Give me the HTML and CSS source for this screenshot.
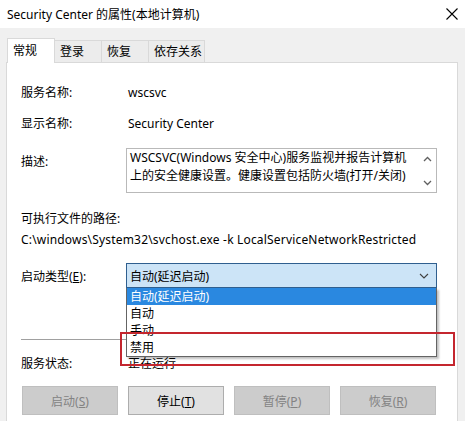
FILE: index.html
```html
<!DOCTYPE html>
<html lang="zh-CN">
<head>
  <meta charset="UTF-8" />
  <title>Security Center 的属性(本地计算机)</title>
  <link rel="stylesheet" href="styles.css">
</head>
<body>

  <div class="titlebar">
    <span class="title">Security Center 的属性(本地计算机)</span>
    <svg class="close" width="12" height="12" viewBox="0 0 12 12">
      <path d="M0.5 0.5 L11.5 11.5 M11.5 0.5 L0.5 11.5" stroke="#000" stroke-width="1.1" fill="none"/>
    </svg>
  </div>

  <div class="dialog">
    <!-- Pestañas -->
    <div class="tabs">
      <div class="tab active">常规</div>
      <div class="tab">登录</div>
      <div class="tab">恢复</div>
      <div class="tab last">依存关系</div>
    </div>

    <div class="panel">
      <div class="row first">
        <div class="label">服务名称:</div>
        <div class="value">wscsvc</div>
      </div>
      <div class="row r2">
        <div class="label">显示名称:</div>
        <div class="value">Security Center</div>
      </div>
      <div class="row desc">
        <div class="label">描述:</div>
        <div class="textbox">
          <div class="textbox-text">WSCSVC(Windows 安全中心)服务监视并报告计算机上的安全健康设置。健康设置包括防火墙(打开/关闭)</div>
          <div class="scrollbar">
            <svg width="9" height="6" viewBox="0 0 9 6"><path d="M1 5 L4.5 1.5 L8 5" stroke="#606060" stroke-width="1.3" fill="none"/></svg>
            <svg width="9" height="6" viewBox="0 0 9 6"><path d="M1 1 L4.5 4.5 L8 1" stroke="#606060" stroke-width="1.3" fill="none"/></svg>
          </div>
        </div>
      </div>
      <div class="line exec-label">可执行文件的路径:</div>
      <div class="line exec-path">C:\windows\System32\svchost.exe -k LocalServiceNetworkRestricted</div>

      <div class="row startup">
        <div class="label">启动类型(<u>E</u>):</div>
        <div class="combo">
          <div class="combo-box">
            <span>自动(延迟启动)</span>
            <svg width="10" height="6" viewBox="0 0 10 6"><path d="M1 1 L5 5 L9 1" stroke="#404040" stroke-width="1.1" fill="none"/></svg>
          </div>
          <div class="combo-list">
            <div class="item selected">自动(延迟启动)</div>
            <div class="item">自动</div>
            <div class="item">手动</div>
            <div class="item">禁用</div>
          </div>
        </div>
      </div>

      <div class="separator"></div>

      <div class="row status">
        <div class="label">服务状态:</div>
        <div class="value">正在运行</div>
      </div>

      <div class="buttons">
        <button class="btn" disabled>启动(<u>S</u>)</button>
        <button class="btn">停止(<u>T</u>)</button>
        <button class="btn" disabled>暂停(<u>P</u>)</button>
        <button class="btn" disabled>恢复(<u>R</u>)</button>
      </div>
    </div>
  </div>

  <div class="highlight"></div>

</body>
</html>
```

FILE: styles.css
```css
body {
  margin: 0;
  width: 465px;
  height: 421px;
  overflow: hidden;
  background-color: #f0f0f0;
  font-family: "Noto Sans", "Noto Sans CJK SC", sans-serif;
  font-size: 12px;
  color: #000;
  position: relative;
}
.titlebar {
  height: 28px;
  background: #fff;
  display: flex;
  align-items: center;
  justify-content: space-between;
  padding: 0 7px 0 7px;
}
.close {
  display: block;
}
.dialog {
  padding: 10px 7px 0 6px;
}
.tabs {
  display: flex;
  align-items: flex-end;
  height: 24px;
  padding-left: 1px;
}
.tab {
  width: 48px;
  height: 22px;
  box-sizing: border-box;
  padding-left: 5px;
  line-height: 21px;
  background: #ececec;
  border: 1px solid #d9d9d9;
  border-bottom: none;
  margin-right: -1px;
}
.tab.last {
  width: 57px;
}
.tab.active {
  background: #fff;
  line-height: 23px;
  position: relative;
  z-index: 1;
  margin-bottom: -1px;
  height: 25px;
}
.panel {
  background: #fff;
  border: 1px solid #d9d9d9;
  border-bottom: none;
  height: 359px;
  padding: 19px 0 0 14px;
  box-sizing: border-box;
}
.row {
  display: flex;
  align-items: center;
  height: 20px;
}
.label {
  width: 105px;
  flex-shrink: 0;
}
.value {
  padding-left: 2px;
}
.r2 {
  margin-top: 11px;
}
.desc {
  margin-top: 15px;
  height: 45px;
  align-items: flex-start;
}
.desc .label {
  padding-top: 4px;
}
.textbox {
  width: 311px;
  height: 45px;
  box-sizing: border-box;
  border: 1px solid #b9b9b9;
  display: flex;
}
.textbox-text {
  flex: 1;
  padding: 0 4px 0 3px;
  line-height: 18px;
}
.scrollbar {
  width: 17px;
  display: flex;
  flex-direction: column;
  justify-content: space-between;
  align-items: center;
  padding: 7px 0 6px;
}
.scrollbar svg {
  display: block;
}
.line {
  height: 20px;
  line-height: 20px;
}
.exec-label {
  margin-top: 16px;
}
.exec-path {
  margin-top: 1px;
  letter-spacing: 0.18px;
}
.startup {
  margin-top: 13px;
  height: 25px;
}
.combo {
  position: relative;
  width: 311px;
  height: 25px;
}
.combo-box {
  height: 25px;
  box-sizing: border-box;
  border: 1px solid #2f5f8f;
  background: #cce4f7;
  display: flex;
  align-items: center;
  justify-content: space-between;
  padding: 0 7px 0 3px;
}
.combo-list {
  position: absolute;
  top: 25px;
  left: 0;
  width: 311px;
  height: 69px;
  box-sizing: border-box;
  border: 1px solid #646464;
  border-top: none;
  background: #fff;
  box-shadow: 2px 2px 2px rgba(0, 0, 0, 0.25);
  z-index: 2;
}
.item {
  height: 17px;
  line-height: 17px;
  padding-left: 3px;
}
.item.selected {
  background: #2a88e0;
  color: #fff;
}
.separator {
  margin-top: 51px;
  height: 1px;
  width: 416px;
  background: #a0a0a0;
}
.status {
  margin-top: 13px;
}
.buttons {
  display: flex;
  gap: 10px;
  margin-top: 13px;
  padding-left: 1px;
}
.btn {
  width: 96px;
  height: 29px;
  font-family: inherit;
  font-size: 12px;
  background: #e1e1e1;
  border: 1px solid #adadad;
  color: #000;
  padding: 0;
}
.btn:disabled {
  background: #cccccc;
  border-color: #bfbfbf;
  color: #838383;
}
.highlight {
  position: absolute;
  left: 120px;
  top: 332px;
  width: 335px;
  height: 34px;
  box-sizing: border-box;
  border: 2px solid #c4262e;
  z-index: 3;
}
```
